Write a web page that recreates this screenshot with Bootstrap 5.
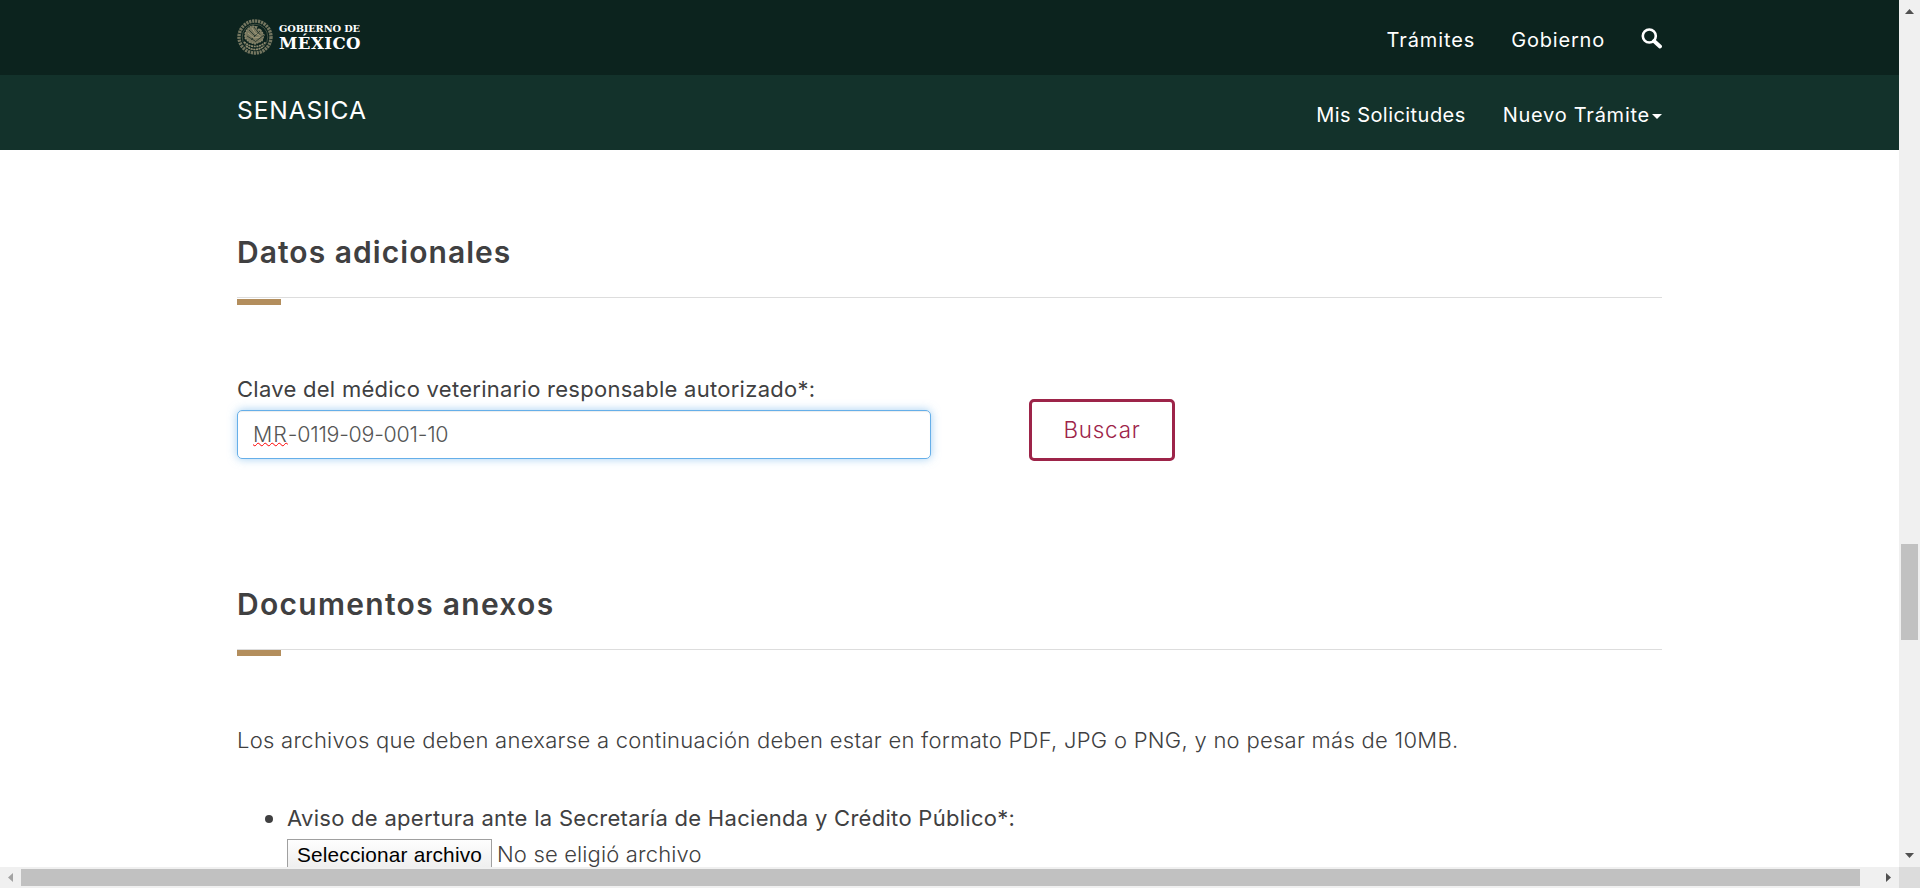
<!DOCTYPE html>
<html lang="es">
<head>
<meta charset="utf-8">
<meta name="viewport" content="width=device-width, initial-scale=1">
<title>SENASICA</title>
<link rel="stylesheet" href="https://cdn.jsdelivr.net/npm/bootstrap@5.3.0/dist/css/bootstrap.min.css">
<style>
  body { font-family: Inter, "Open Sans", sans-serif; font-size: 22px; line-height: 32px; font-weight: 300; color: #404041; background: #fff; }
  .app-shell { display: grid; grid-template: 867px 21px / 1899px 21px; width: 1920px; height: 888px; }
  .page-wrap { width: 1425px; margin-left: 237px; }
  .topbar, .subbar { height: 75px; font-size: 20px; font-weight: 400; }
  .topbar { background: #0c231e; }
  .subbar { background: #13322b; }
  .topbar .nav-link, .subbar .nav-link { padding: 0; color: #fff; line-height: 30px; white-space: nowrap; }
  .logo-text { font-family: "DejaVu Serif", serif; font-weight: 700; fill: #fff; }
  .site-name { font-size: 24.6px; letter-spacing: .85px; color: #fff; line-height: 40px; margin-top: 15px; }
  .section-title { position: relative; font-size: 30px; line-height: 40px; font-weight: 600; padding: 0 0 25px; border-bottom: 1px solid #ddd; margin: 0; }
  .section-title::after { content: ""; position: absolute; left: 0; top: 67px; width: 44px; height: 6px; background: #b38e5d; }
  .section-title.snug::after { top: 66px; }
  .field-label { font-weight: 400; letter-spacing: .27px; white-space: nowrap; }
  .key-input { width: 694px; height: 49px; padding: 0 15px; font-size: 21.4px; font-weight: 300; letter-spacing: -.25px; color: #555; border: 1px solid #66afe9; border-radius: 5px; box-shadow: inset 0 1px 1px rgba(0,0,0,.075), 0 0 10px rgba(102,175,233,.6); line-height: 47px; }
  .spell { letter-spacing: 1px; text-decoration: underline wavy #f00 1px; text-underline-offset: 0; text-decoration-skip-ink: none; }
  .btn-buscar { width: 146px; height: 62px; border: 3px solid #9d2449; border-radius: 5px; color: #9d2449; background: #fff; font-size: 22.4px; font-weight: 300; letter-spacing: .8px; padding: 0; }
  .file-btn { width: 205px; height: 34px; border: 1px solid #a0a0a0; background: linear-gradient(#fefefe, #ececec); color: #000; font: 400 20.8px/30px "Liberation Sans", sans-serif; letter-spacing: .19px; text-align: center; white-space: nowrap; }
  .bullet { width: 8px; height: 8px; border-radius: 50%; background: #404041; margin: 13px 14px 0 28px; }
  .sb-track { background: #f0f0f0; }
  .sb-thumb { background: #c1c1c1; }
</style>
</head>
<body class="overflow-hidden">
<div class="app-shell">
  <div class="overflow-hidden">
    <header>
      <nav class="topbar">
        <div class="page-wrap d-flex justify-content-between">
          <svg width="126" height="75" viewBox="0 0 126 75" aria-label="Gobierno de México">
            <g fill="none" stroke="#8f8b70">
              <circle cx="18" cy="37" r="16" stroke-width="3.4" stroke-dasharray="2.2 .8" opacity=".8"/>
              <circle cx="18" cy="37" r="12.8" stroke-width=".6" opacity=".7"/>
              <path d="M9 46q9 7 18 0M7 42q11 9 22 0" stroke-width="1.7" stroke-dasharray="2 .7"/>
              <path d="M8 34q2-7 8-8l4 1-2 3 5-1 4 6-2 6-7 3-6-2-4-4z" fill="#77775f" stroke-width="1.2" stroke-dasharray="2 .8"/>
              <path d="M12 30l6 6M17 27l7 9M10 36l8 5M23 31l-9 9M27 35l-9 7" stroke="#28382d" stroke-width=".9"/>
              <path d="M15 28l3 5 6 3M11 33l6 5 6-1" stroke="#a49c7c" stroke-width=".9"/>
            </g>
            <text class="logo-text" x="42" y="32" font-size="9.8" textLength="81">GOBIERNO DE</text>
            <text class="logo-text" x="42" y="49.300" font-size="16.6" textLength="81.500">MÉXICO</text>
          </svg>
          <ul class="nav flex-nowrap" style="padding-top:25px">
            <li><a class="nav-link" href="#" style="letter-spacing:.9px;margin-right:36px">Trámites</a></li>
            <li><a class="nav-link" href="#" style="letter-spacing:.8px;margin-right:36px">Gobierno</a></li>
            <li class="d-flex"><svg width="21" height="21" viewBox="0 0 21 21" style="margin-top:3px" fill="none" stroke="#fff" aria-label="Buscar"><circle cx="8.3" cy="8" r="6.5" stroke-width="2.6"/><path d="M13 13l6 5.500" stroke-width="3.8" stroke-linecap="round"/></svg></li>
          </ul>
        </div>
      </nav>
      <nav class="subbar">
        <div class="page-wrap d-flex justify-content-between">
          <div class="site-name">SENASICA</div>
          <ul class="nav flex-nowrap" style="padding-top:25px">
            <li><a class="nav-link" href="#" style="letter-spacing:.45px;margin-right:37px">Mis Solicitudes</a></li>
            <li><a class="nav-link d-flex align-items-center" href="#"><span style="letter-spacing:.75px">Nuevo Trámite</span><svg width="10" height="5" viewBox="0 0 10 5" style="margin:3px 0 0 2px"><path d="M0 0h10L5 5z" fill="#fff"/></svg></a></li>
          </ul>
        </div>
      </nav>
    </header>
    <main class="page-wrap">
      <section style="padding-top:82px">
        <h2 class="section-title" style="letter-spacing:1.05px">Datos adicionales</h2>
        <div class="d-flex" style="margin-top:75px">
          <div>
            <label class="field-label d-block" for="clave">Clave del médico veterinario responsable autorizado*:</label>
            <div id="clave" class="key-input" style="margin-top:5px" role="textbox"><span class="spell">MR</span>-0119-09-001-10</div>
          </div>
          <button class="btn btn-buscar" type="button" style="margin:26px 0 0 98px">Buscar</button>
        </div>
      </section>
      <section style="padding-top:123px">
        <h2 class="section-title snug" style="letter-spacing:1.3px">Documentos anexos</h2>
        <p class="mb-0 text-nowrap" style="margin-top:74px;letter-spacing:.28px">Los archivos que deben anexarse a continuación deben estar en formato PDF, JPG o PNG, y no pesar más de 10MB.</p>
        <div class="d-flex" style="margin-top:46px">
          <span class="bullet"></span>
          <div>
            <div class="field-label" style="letter-spacing:.29px">Aviso de apertura ante la Secretaría de Hacienda y Crédito Público*:</div>
            <div class="d-flex text-nowrap" style="margin-top:5px">
              <span class="file-btn">Seleccionar archivo</span>
              <span style="line-height:30px;margin-left:5px;letter-spacing:.15px">No se eligió archivo</span>
            </div>
          </div>
        </div>
      </section>
    </main>
  </div>
  <div class="sb-track d-flex flex-column align-items-center">
    <svg width="9" height="5" viewBox="0 0 9 5" style="margin-top:9px"><path d="M0 5h9L4.500 0z" fill="#505050"/></svg>
    <div class="sb-thumb" style="width:17px;height:96px;margin-top:530px"></div>
    <svg class="mt-auto" width="9" height="5" viewBox="0 0 9 5" style="margin-bottom:9px"><path d="M0 0h9L4.500 5z" fill="#505050"/></svg>
  </div>
  <div class="sb-track d-flex align-items-center">
    <svg width="5" height="9" viewBox="0 0 5 9" style="margin-left:8px"><path d="M5 0v9L0 4.500z" fill="#a3a3a3"/></svg>
    <div class="sb-thumb" style="width:1839px;height:17px;margin-left:8px"></div>
    <svg width="5" height="9" viewBox="0 0 5 9" style="margin-left:26px"><path d="M0 0v9l5-4.500z" fill="#505050"/></svg>
  </div>
  <div style="background:#dcdcdc"></div>
</div>
<script src="https://cdn.jsdelivr.net/npm/bootstrap@5.3.0/dist/js/bootstrap.bundle.min.js"></script>
</body>
</html>
